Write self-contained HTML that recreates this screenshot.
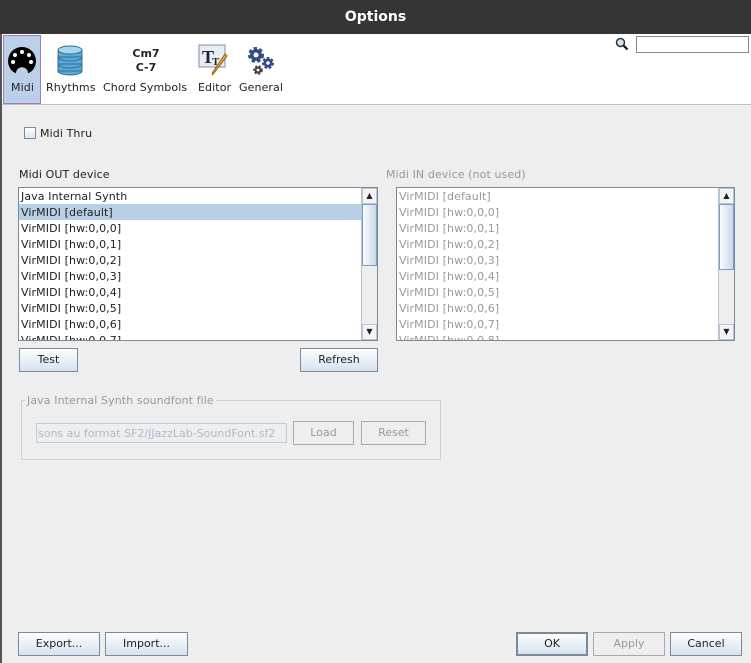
<!DOCTYPE html>
<html><head><style>
*{box-sizing:border-box;margin:0;padding:0}
body{width:751px;height:663px;background:#eeeeee;font-family:"DejaVu Sans","Liberation Sans",sans-serif;font-size:11px;color:#222;position:relative;overflow:hidden}
.abs{position:absolute}
.title{left:0;top:0;width:751px;height:34px;background:#353535;color:#fff;font-weight:bold;font-size:14px;text-align:center;line-height:34px}
.tb{left:2px;top:34px;width:749px;height:71px;background:#fff;border-bottom:1px solid #c0c0c0}
.lbl{font-size:11px;color:#222;white-space:nowrap;letter-spacing:0.1px}
.btn{position:absolute;border:1px solid #7a8a99;background:linear-gradient(#fdfeff,#d6e2ee);text-align:center;font-size:11px;line-height:22px;color:#222}
.list{position:absolute;background:#fff;border:1px solid #7a8a99;overflow:hidden}
.row{height:16px;line-height:17px;padding-left:2px;white-space:nowrap;font-size:11px;letter-spacing:0.1px}
.sb{position:absolute;top:0;right:0;width:16px;bottom:0;background:#eee;border-left:1px solid #b8c4cf}
.thumb{position:absolute;left:0;right:0;background:linear-gradient(90deg,#fafcfe,#c9d8e8);border:1px solid #7a9ccc}
.arr{position:absolute;left:0;right:0;height:16px;background:#f4f4f4;border:1px solid #b8c4cf;font-size:8px;text-align:center;line-height:14px}
.gray{color:#999}
</style></head><body>
<div class="abs" style="left:0;top:34px;width:2px;height:629px;background:#555"></div>
<div class="abs title">Options</div>
<div class="abs tb"></div>
<div class="abs" style="left:3px;top:35px;width:38px;height:69px;background:#bccfe9;border:1px solid #9a7fc4"></div>
<svg class="abs" style="left:6px;top:45px" width="32" height="32" viewBox="0 0 32 32"><path d="M16 2a14 14 0 0 0-9 24.7l3 1.5a5 5 0 0 1 12 0l3-1.5A14 14 0 0 0 16 2z" fill="#000"/><circle cx="16" cy="7" r="2" fill="#fff"/><circle cx="9" cy="10" r="2" fill="#fff"/><circle cx="23" cy="10" r="2" fill="#fff"/><circle cx="7" cy="17" r="2" fill="#fff"/><circle cx="25" cy="17" r="2" fill="#fff"/></svg>
<div class="abs lbl" style="left:11px;top:81px">Midi</div>
<svg class="abs" style="left:56px;top:44px" width="28" height="32" viewBox="0 0 28 32"><g fill="#5aa8d4" stroke="#2c6f99"><ellipse cx="14" cy="27" rx="12" ry="4"/><rect x="2" y="20" width="24" height="7"/><ellipse cx="14" cy="20" rx="12" ry="4"/><rect x="2" y="13" width="24" height="7"/><ellipse cx="14" cy="13" rx="12" ry="4"/><rect x="2" y="6" width="24" height="7"/><ellipse cx="14" cy="6" rx="12" ry="4" fill="#a9d6ee"/></g></svg>
<div class="abs lbl" style="left:46px;top:81px">Rhythms</div>
<div class="abs" style="left:128px;top:47px;width:36px;text-align:center;font-weight:bold;font-size:11px;line-height:14px;color:#222">Cm7<br>C-7</div>
<div class="abs lbl" style="left:103px;top:81px">Chord Symbols</div>
<svg class="abs" style="left:198px;top:44px" width="32" height="32" viewBox="0 0 32 32"><rect x="1" y="1" width="26" height="22" fill="#e8eef4" stroke="#7d8fa3"/><text x="4" y="19" font-family="Liberation Serif" font-weight="bold" font-size="18" fill="#223">T</text><text x="14" y="21" font-family="Liberation Serif" font-weight="bold" font-size="11" fill="#223">T</text><path d="M29 12L16 29l-2 2 1-3L27 10z" fill="#f0b040" stroke="#8a5a10"/></svg>
<div class="abs lbl" style="left:198px;top:81px">Editor</div>
<svg class="abs" style="left:246px;top:44px" width="30" height="32" viewBox="0 0 30 32"><circle cx="10" cy="11" r="6" fill="#2f4d86" stroke="#2f4d86" stroke-width="4" stroke-dasharray="3 2.2"/><circle cx="10" cy="11" r="5.5" fill="#2f4d86"/><circle cx="10" cy="11" r="2.5" fill="#fff"/><circle cx="22" cy="19" r="4.5" fill="#2f4d86" stroke="#2f4d86" stroke-width="3" stroke-dasharray="2.4 1.6"/><circle cx="22" cy="19" r="1.8" fill="#fff"/><circle cx="12" cy="26" r="3.5" fill="#444" stroke="#444" stroke-width="2.5" stroke-dasharray="2 1.4"/><circle cx="12" cy="26" r="1.4" fill="#fff"/></svg>
<div class="abs lbl" style="left:239px;top:81px">General</div>
<svg class="abs" style="left:615px;top:37px" width="14" height="14" viewBox="0 0 14 14"><circle cx="5.5" cy="5.5" r="4" fill="#cfe3f5" stroke="#333" stroke-width="1.5"/><path d="M8.5 8.5l4 4" stroke="#111" stroke-width="2.2"/></svg>
<div class="abs" style="left:636px;top:36px;width:113px;height:17px;background:#fff;border:1px solid #7a8a99"></div>

<div class="abs" style="left:24px;top:127px;width:12px;height:12px;border:1px solid #7a8a99;background:linear-gradient(#fff,#dde6ef)"></div>
<div class="abs lbl" style="left:40px;top:127px">Midi Thru</div>

<div class="abs lbl" style="left:19px;top:168px">Midi OUT device</div>
<div class="list" style="left:18px;top:187px;width:360px;height:154px">
<div class="row">Java Internal Synth</div>
<div class="row" style="background:#b8cfe5;margin-right:16px">VirMIDI [default]</div>
<div class="row">VirMIDI [hw:0,0,0]</div><div class="row">VirMIDI [hw:0,0,1]</div><div class="row">VirMIDI [hw:0,0,2]</div><div class="row">VirMIDI [hw:0,0,3]</div><div class="row">VirMIDI [hw:0,0,4]</div><div class="row">VirMIDI [hw:0,0,5]</div><div class="row">VirMIDI [hw:0,0,6]</div><div class="row">VirMIDI [hw:0,0,7]</div>
<div class="sb"><div class="arr" style="top:0">▲</div><div class="thumb" style="top:16px;height:62px"></div><div class="arr" style="bottom:0">▼</div></div>
</div>
<div class="btn" style="left:19px;top:348px;width:59px;height:24px">Test</div>
<div class="btn" style="left:300px;top:348px;width:78px;height:24px">Refresh</div>

<div class="abs lbl gray" style="left:386px;top:168px">Midi IN device (not used)</div>
<div class="list gray" style="left:396px;top:187px;width:339px;height:154px">
<div class="row">VirMIDI [default]</div><div class="row">VirMIDI [hw:0,0,0]</div><div class="row">VirMIDI [hw:0,0,1]</div><div class="row">VirMIDI [hw:0,0,2]</div><div class="row">VirMIDI [hw:0,0,3]</div><div class="row">VirMIDI [hw:0,0,4]</div><div class="row">VirMIDI [hw:0,0,5]</div><div class="row">VirMIDI [hw:0,0,6]</div><div class="row">VirMIDI [hw:0,0,7]</div><div class="row">VirMIDI [hw:0,0,8]</div>
<div class="sb"><div class="arr" style="top:0;color:#222">▲</div><div class="thumb" style="top:16px;height:66px"></div><div class="arr" style="bottom:0;color:#222">▼</div></div>
</div>

<div class="abs" style="left:21px;top:400px;width:420px;height:60px;border:1px solid #c4d0dc"></div>
<div class="abs lbl gray" style="left:25px;top:394px;background:#eee;padding:0 2px">Java Internal Synth soundfont file</div>
<div class="abs gray" style="left:36px;top:423px;width:251px;height:20px;border:1px solid #b8cfe5;line-height:19px;padding-left:1px;font-size:11px;overflow:hidden;white-space:nowrap;color:#a8bcd0">sons au format SF2/JJazzLab-SoundFont.sf2</div>
<div class="btn gray" style="left:293px;top:421px;width:61px;height:24px;background:#eee;border-color:#aaa">Load</div>
<div class="btn gray" style="left:361px;top:421px;width:65px;height:24px;background:#eee;border-color:#aaa">Reset</div>

<div class="btn" style="left:18px;top:632px;width:82px;height:24px">Export...</div>
<div class="btn" style="left:105px;top:632px;width:83px;height:24px">Import...</div>
<div class="btn" style="left:516px;top:632px;width:72px;height:24px;border:2px solid #7a8a99;line-height:20px">OK</div>
<div class="btn gray" style="left:593px;top:632px;width:72px;height:24px;background:#eee;border-color:#aaa">Apply</div>
<div class="btn" style="left:670px;top:632px;width:72px;height:24px">Cancel</div>
</body></html>
